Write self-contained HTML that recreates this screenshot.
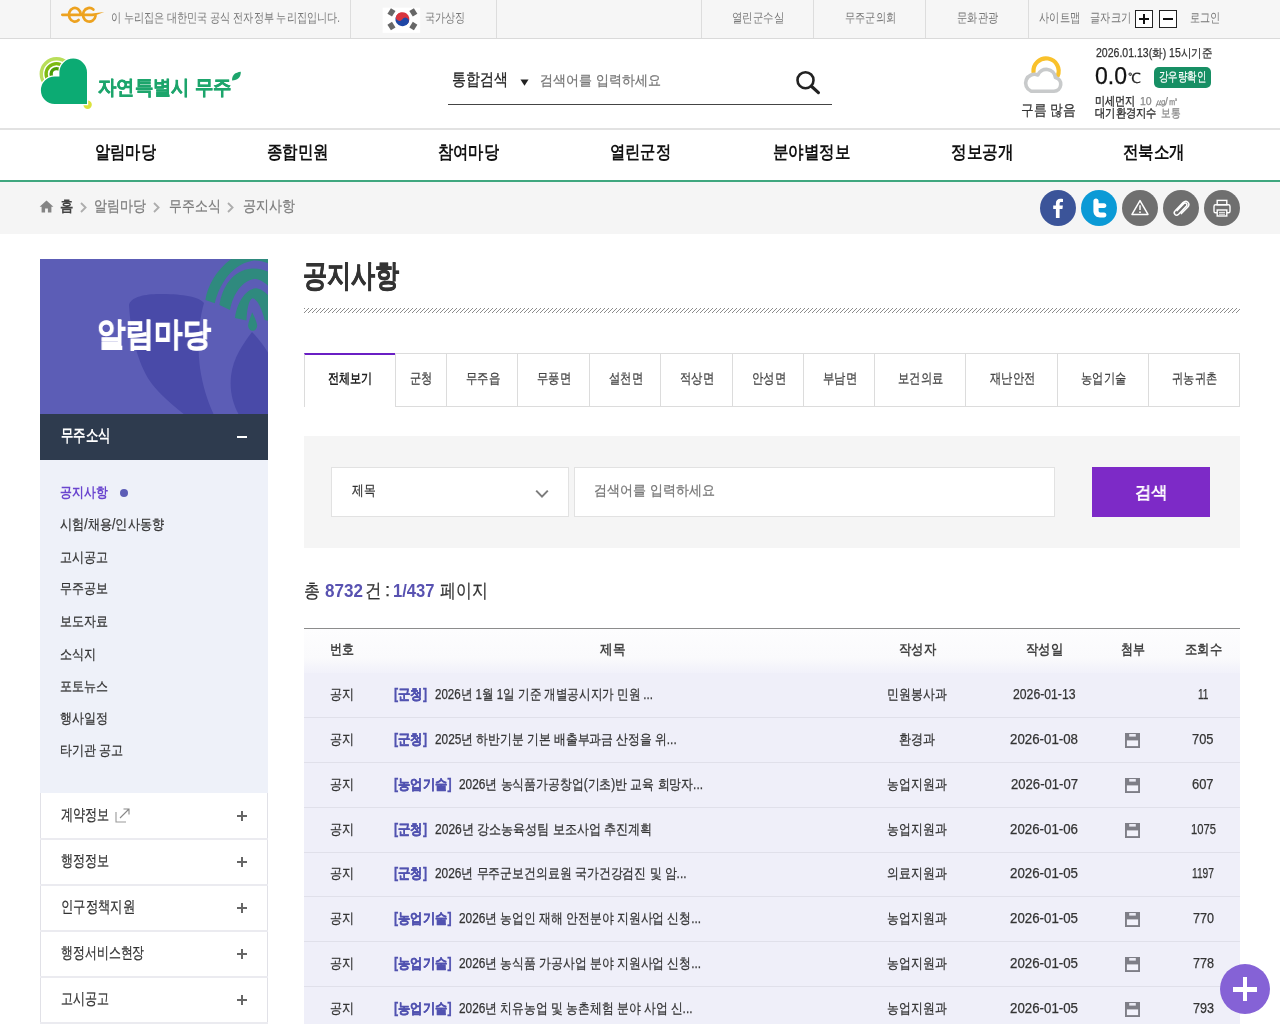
<!DOCTYPE html>
<html lang="ko">
<head>
<meta charset="utf-8">
<title>공지사항</title>
<style>
*{box-sizing:border-box;margin:0;padding:0}
html,body{width:1280px;height:1024px;overflow:hidden;background:#fff}
body{font-family:"Liberation Sans",sans-serif;color:#333;position:relative;font-size:14px}
.abs{position:absolute;white-space:pre;transform-origin:0 50%;-webkit-text-stroke-width:0.25px}
#top .abs{-webkit-text-stroke-width:0}
i{font-style:normal}
#wrap{position:absolute;left:0;top:0;width:1280px;height:1024px;overflow:hidden;will-change:transform}
.bx{position:absolute}
#top{position:absolute;left:0;top:0;width:1280px;height:39px;background:#f6f6f6;border-bottom:1px solid #dadada}
#top .vd{position:absolute;top:0;width:1px;height:38px;background:#dddddd}
.szb{position:absolute;top:10px;width:18px;height:18px;border:1px solid #222;background:#fff}
.szb i{position:absolute;background:#111}
#hdr{position:absolute;left:0;top:39px;width:1280px;height:90px;background:#fff}
#hdrb{position:absolute;left:0;top:128.4px;width:1280px;height:1.2px;background:#e2e2e2}
#gline{position:absolute;left:0;top:180px;width:1280px;height:2px;background:#40a77f}
#crumb{position:absolute;left:0;top:182px;width:1280px;height:52px;background:#f5f5f5}
.circ{position:absolute;top:190px;width:36px;height:36px;border-radius:50%}
#sidehead{position:absolute;left:40px;top:259px;width:228px;height:155px;background:#5c5db6;overflow:hidden}
#sidebar2{position:absolute;left:40px;top:414px;width:228px;height:46px;background:#2e3b4e}
#submenu{position:absolute;left:40px;top:460px;width:228px;height:333px;background:#eef1f9}
.sitem{position:absolute;left:40px;width:228px;height:45px;background:#fff;border:1px solid #e7e7ee}
.pl{position:absolute;width:10px;height:2px;background:#666}
.pl:after{content:"";position:absolute;left:4px;top:-4px;width:2px;height:10px;background:#666}
.tab{position:absolute;top:353px;height:54px;border:1px solid #dcdcdc;border-left:none;background:#fff}
.row{position:absolute;left:304px;width:936px;background:#efeff9;border-bottom:1px solid #e0e0ea}
</style>
</head>
<body>
<div id="wrap">
<div id="top">
<i class="vd" style="left:50px"></i><i class="vd" style="left:350px"></i><i class="vd" style="left:496px"></i><i class="vd" style="left:701px"></i><i class="vd" style="left:813px"></i><i class="vd" style="left:925px"></i><i class="vd" style="left:1028px"></i>
<svg class="abs" style="left:58px;top:4px" width="50" height="24" viewBox="58 4 50 24">
 <g fill="none" stroke="#eda21f" stroke-width="2.7" stroke-linecap="round">
  <path d="M80.68 14.20 A5.90 6.85 0 1 0 78.59 20.05"/>
  <path d="M93.35 9.55 A6.30 6.85 0 1 0 95.54 15.75"/>
 </g>
 <path d="M62.4 13.4 L92 13.6 L104.2 12.1 L93 16.3 L62.4 16.3 A1.45 1.45 0 0 1 62.4 13.4Z" fill="#eda21f"/>
</svg>
<svg class="abs" style="left:382px;top:7px" width="39" height="26" viewBox="382 7 39 26">
 <rect x="382.6" y="7.6" width="37.6" height="25.2" fill="#fff"/>
 <g transform="translate(402.4 19.2)">
  <g transform="rotate(33)">
  <path d="M-7 0 A7 7 0 0 1 7 0Z" fill="#d9353f"/>
  <path d="M-7 0 A7 7 0 0 0 7 0Z" fill="#1f47a6"/>
  <circle r="3.5" cx="-3.5" cy="0" fill="#d9353f"/>
  <circle r="3.5" cx="3.5" cy="0" fill="#1f47a6"/>
  </g>
  <g fill="#686868">
   <rect x="-15.6" y="-3.3" width="5.4" height="6.6" transform="rotate(32)"/>
   <rect x="10.2" y="-3.3" width="5.4" height="6.6" transform="rotate(32)"/>
   <rect x="-15.6" y="-3.3" width="5.4" height="6.6" transform="rotate(-32)"/>
   <rect x="10.2" y="-3.3" width="5.4" height="6.6" transform="rotate(-32)"/>
  </g>
 </g>
</svg>
<span class="abs" style="left:111.0px;top:10.0px;font-size:12.5px;line-height:16px;color:#777;transform:scaleX(0.7793);">이 누리집은 대한민국 공식 전자정부 누리집입니다.</span><span class="abs" style="left:425.0px;top:10.0px;font-size:12.5px;line-height:16px;color:#777;transform:scaleX(0.7692);">국가상징</span><span class="abs" style="left:732.0px;top:10.0px;font-size:12.5px;line-height:16px;color:#777;transform:scaleX(0.8000);">열린군수실</span><span class="abs" style="left:844.5px;top:10.0px;font-size:12.5px;line-height:16px;color:#777;transform:scaleX(0.7846);">무주군의회</span><span class="abs" style="left:957.0px;top:10.0px;font-size:12.5px;line-height:16px;color:#777;transform:scaleX(0.7885);">문화관광</span><span class="abs" style="left:1039.0px;top:10.0px;font-size:12.5px;line-height:16px;color:#777;transform:scaleX(0.7885);">사이트맵</span><span class="abs" style="left:1089.5px;top:10.0px;font-size:12.5px;line-height:16px;color:#777;transform:scaleX(0.7885);">글자크기</span><span class="abs" style="left:1189.5px;top:10.0px;font-size:12.5px;line-height:16px;color:#777;transform:scaleX(0.7821);">로그인</span>
<span class="szb" style="left:1135px"><i style="left:3px;top:7px;width:10px;height:2px"></i><i style="left:7px;top:3px;width:2px;height:10px"></i></span>
<span class="szb" style="left:1159px"><i style="left:3px;top:7px;width:10px;height:2px"></i></span>
</div>
<div id="hdr"></div><div id="hdrb"></div>
<svg class="abs" style="left:36px;top:52px" width="62" height="62" viewBox="36 52 62 62">
 <circle cx="87.6" cy="104.8" r="4.2" fill="#dbe23c"/>
 <g fill="none">
  <circle cx="56.5" cy="74" r="15.2" stroke="#b9de5a" stroke-width="3.4"/>
  <circle cx="56.5" cy="74" r="10.4" stroke="#7cba12" stroke-width="3.4"/>
  <circle cx="56.5" cy="74" r="5.4" stroke="#4b9d06" stroke-width="3.4"/>
 </g>
 <path d="M59.4 76.4 L59.4 72.4 A13.8 13.8 0 0 1 87 72.4 L87 104 L54.7 104 A13.8 13.8 0 0 1 54.7 76.4 Z" fill="#fff" stroke="#fff" stroke-width="2.4"/>
 <path d="M59.4 76.4 L59.4 72.4 A13.8 13.8 0 0 1 87 72.4 L87 104 L54.7 104 A13.8 13.8 0 0 1 54.7 76.4 Z" fill="#0cab73"/>
</svg>
<svg class="abs" style="left:231px;top:71px" width="11" height="11" viewBox="0 0 11 11"><path d="M1 9.5 C1 4 4 1.5 9.8 0.8 C10 6 7 9.5 1 9.5Z" fill="#1da56c"/></svg>
<span class="abs" style="left:98.0px;top:74.5px;font-size:19.5px;line-height:25px;color:#1da56c;transform:scaleX(0.9180);font-weight:bold;-webkit-text-stroke:0.5px #1da56c;">자연특별시 무주</span><div class="bx" style="left:448px;top:103.8px;width:384px;height:1.5px;background:#444"></div>
<span class="abs" style="left:452.0px;top:68.8px;font-size:16.5px;line-height:21px;color:#222;transform:scaleX(0.8235);">통합검색</span><svg class="abs" style="left:519.5px;top:78.6px" width="9" height="7.2" viewBox="0 0 10 8"><path d="M0.5 0.5 L9.5 0.5 L5 7.5Z" fill="#222"/></svg>
<span class="abs" style="left:540.3px;top:70.7px;font-size:14px;line-height:18px;color:#777;transform:scaleX(0.9277);">검색어를 입력하세요</span><svg class="abs" style="left:794px;top:69px" width="28" height="27" viewBox="0 0 28 27"><circle cx="11.5" cy="11.2" r="8" fill="none" stroke="#222" stroke-width="2.6"/><path d="M17.4 17.2 L24.4 23.6" stroke="#222" stroke-width="3.2" stroke-linecap="round"/></svg>
<svg class="abs" style="left:1019.3px;top:54px" width="48" height="42" viewBox="1020 54 48 42">
 <path d="M1034.5 72 A12.6 12.6 0 1 1 1058.6 76" fill="none" stroke="#f9c12b" stroke-width="4.2" stroke-linecap="round"/>
 <path d="M1032 91.2 L1055 91.2 A7 7 0 0 0 1056.4 77.4 A9.2 9.2 0 0 0 1038.8 75 A8.3 8.3 0 0 0 1032 91.2Z" fill="#fff" stroke="#c8cacb" stroke-width="3.6" stroke-linejoin="round"/>
</svg>
<span class="abs" style="left:1020.6px;top:100.4px;font-size:15px;line-height:20px;color:#333;transform:scaleX(0.8477);">구름 많음</span><span class="abs" style="left:1095.6px;top:44.5px;font-size:12px;line-height:16px;color:#333;transform:scaleX(0.8769);">2026.01.13(화) 15시기준</span><span class="abs" style="left:1095.2px;top:61.4px;font-size:23.5px;line-height:31px;color:#111;transform:scaleX(0.9794);">0.0</span><span class="abs" style="left:1128.0px;top:68.9px;font-size:14px;line-height:18px;color:#222;">℃</span><div class="bx" style="left:1153.5px;top:67px;width:57px;height:20.5px;background:#178f64;border-radius:5px"></div>
<span class="abs" style="left:1158.5px;top:68.7px;font-size:12.5px;line-height:16px;color:#fff;transform:scaleX(0.7231);">강우량확인</span><span class="abs" style="left:1095.2px;top:92.9px;font-size:12px;line-height:16px;color:#2a2a2a;transform:scaleX(0.8438);-webkit-text-stroke:0.35px #2a2a2a;">미세먼지</span><span class="abs" style="left:1140.0px;top:94.0px;font-size:11px;line-height:14px;color:#888;transform:scaleX(0.9539);">10 ㎍/㎥</span><span class="abs" style="left:1095.2px;top:105.1px;font-size:12px;line-height:16px;color:#2a2a2a;transform:scaleX(0.8542);-webkit-text-stroke:0.35px #2a2a2a;">대기환경지수</span><span class="abs" style="left:1161.3px;top:105.1px;font-size:12px;line-height:16px;color:#888;transform:scaleX(0.8125);">보통</span><span class="abs" style="left:95.0px;top:141.1px;font-size:17.5px;line-height:23px;color:#111;transform:scaleX(0.8472);font-weight:bold;-webkit-text-stroke-width:0;">알림마당</span><span class="abs" style="left:266.5px;top:141.1px;font-size:17.5px;line-height:23px;color:#111;transform:scaleX(0.8611);font-weight:bold;-webkit-text-stroke-width:0;">종합민원</span><span class="abs" style="left:438.0px;top:141.1px;font-size:17.5px;line-height:23px;color:#111;transform:scaleX(0.8472);font-weight:bold;-webkit-text-stroke-width:0;">참여마당</span><span class="abs" style="left:609.5px;top:141.1px;font-size:17.5px;line-height:23px;color:#111;transform:scaleX(0.8472);font-weight:bold;-webkit-text-stroke-width:0;">열린군정</span><span class="abs" style="left:772.5px;top:141.1px;font-size:17.5px;line-height:23px;color:#111;transform:scaleX(0.8611);font-weight:bold;-webkit-text-stroke-width:0;">분야별정보</span><span class="abs" style="left:951.2px;top:141.1px;font-size:17.5px;line-height:23px;color:#111;transform:scaleX(0.8681);font-weight:bold;-webkit-text-stroke-width:0;">정보공개</span><span class="abs" style="left:1123.0px;top:141.1px;font-size:17.5px;line-height:23px;color:#111;transform:scaleX(0.8611);font-weight:bold;-webkit-text-stroke-width:0;">전북소개</span>
<div id="gline"></div>
<div id="crumb"></div>
<svg class="abs" style="left:39px;top:200px" width="15" height="13" viewBox="0 0 15 13"><path d="M7.5 0.6 L14.4 6.8 L12.4 6.8 L12.4 12.4 L8.9 12.4 L8.9 8.4 L6.1 8.4 L6.1 12.4 L2.6 12.4 L2.6 6.8 L0.6 6.8Z" fill="#858585"/></svg>
<span class="abs" style="left:59.6px;top:196.4px;font-size:15px;line-height:20px;color:#444;transform:scaleX(0.8933);font-weight:bold;-webkit-text-stroke-width:0;">홈</span><svg class="abs" style="left:79.6px;top:202px" width="7" height="11" viewBox="0 0 7 11"><path d="M1 1 L5.6 5.5 L1 10" fill="none" stroke="#adadad" stroke-width="1.8"/></svg><svg class="abs" style="left:153.2px;top:202px" width="7" height="11" viewBox="0 0 7 11"><path d="M1 1 L5.6 5.5 L1 10" fill="none" stroke="#adadad" stroke-width="1.8"/></svg><svg class="abs" style="left:227.2px;top:202px" width="7" height="11" viewBox="0 0 7 11"><path d="M1 1 L5.6 5.5 L1 10" fill="none" stroke="#adadad" stroke-width="1.8"/></svg>
<span class="abs" style="left:94.0px;top:196.4px;font-size:15px;line-height:20px;color:#7c7c7c;transform:scaleX(0.8667);">알림마당</span><span class="abs" style="left:169.0px;top:196.4px;font-size:15px;line-height:20px;color:#7c7c7c;transform:scaleX(0.8583);">무주소식</span><span class="abs" style="left:243.0px;top:196.4px;font-size:15px;line-height:20px;color:#7c7c7c;transform:scaleX(0.8667);">공지사항</span>
<div class="circ" style="left:1040px;background:#3b5499"></div>
<div class="circ" style="left:1081px;background:#0b9ad6"></div>
<div class="circ" style="left:1122px;background:#6f6f6f"></div>
<div class="circ" style="left:1163px;background:#6f6f6f"></div>
<div class="circ" style="left:1204px;background:#6f6f6f"></div>
<svg class="abs" style="left:1040px;top:190px" width="36" height="36" viewBox="0 0 36 36"><path d="M19.6 28 L19.6 19 L22.4 19 L22.9 15.6 L19.6 15.6 L19.6 13.6 C19.6 12.5 20 12 21.3 12 L23 12 L23 8.9 C22.4 8.8 21.4 8.7 20.4 8.7 C17.7 8.7 15.9 10.3 15.9 13.2 L15.9 15.6 L13.2 15.6 L13.2 19 L15.9 19 L15.9 28Z" fill="#fff"/></svg>
<svg class="abs" style="left:1081px;top:190px" width="36" height="36" viewBox="0 0 36 36"><path d="M12.4 11 C12.4 9.4 13.6 8.4 15 8.4 C16.4 8.4 17.6 9.4 17.6 11 L17.6 13.2 L23 13.2 C24.4 13.2 25.4 14.2 25.4 15.6 C25.4 17 24.4 18 23 18 L17.6 18 L17.6 20.4 C17.6 21.8 18.4 22.6 19.8 22.6 L23 22.6 C24.4 22.6 25.4 23.6 25.4 25 C25.4 26.4 24.4 27.4 23 27.4 L19 27.4 C15 27.4 12.4 24.8 12.4 21Z" fill="#fff"/></svg>
<svg class="abs" style="left:1122px;top:190px" width="36" height="36" viewBox="0 0 36 36"><path d="M18 10.6 L26 24.4 L10 24.4Z" fill="none" stroke="#fff" stroke-width="1.5" stroke-linejoin="round"/><path d="M18 15.2 L18 20" stroke="#fff" stroke-width="1.5"/><circle cx="18" cy="22.2" r="0.9" fill="#fff"/></svg>
<svg class="abs" style="left:1163px;top:190px" width="36" height="36" viewBox="0 0 36 36"><path d="M14.2 20.6 L21 13.6 C22.6 12 25 14.2 23.4 16 L15.6 24.2 C13 26.8 9.6 23.4 12.2 20.8 L20 12.6 C23.4 9.2 28 13.6 24.6 17.2 L18.4 23.6" fill="none" stroke="#fff" stroke-width="1.5" stroke-linecap="round"/></svg>
<svg class="abs" style="left:1204px;top:190px" width="36" height="36" viewBox="0 0 36 36"><rect x="13.2" y="10.4" width="9.6" height="4.4" fill="none" stroke="#fff" stroke-width="1.4"/><rect x="10" y="14.8" width="16" height="8" rx="1.6" fill="none" stroke="#fff" stroke-width="1.4"/><rect x="13.2" y="20" width="9.6" height="6" fill="#6f6f6f" stroke="#fff" stroke-width="1.4"/><path d="M15 22.4 H21 M15 24.2 H21" stroke="#fff" stroke-width="0.9"/></svg>
<div id="sidehead">
<svg class="abs" style="left:0;top:0" width="228" height="155" viewBox="40 259 228 155">
 <path d="M129 305 C131 296 148 293.500 163 294 C182 294 200 297 204 303 C199 320 197 345 200 368 C203 388 208 402 214 415 L185 415 C172 405 160 394 152 384 C140 368 131 340 129 305Z" fill="#494aa8"/>
 <path d="M252 332 C243 344 233 358 231 376 C229.500 392 233 404 239 415 L269 415 L269 354 C264 346 258 338 252 332Z" fill="#494aa8"/>
 <g fill="#2f8a7e">
  <path d="M205.4 300 C207.5 286 216 270 232.500 258 L269 258 L269 263.500 C265 262 260 260.500 254 260.500 C234 263 220 282 214.800 303.200Z"/>
  <path d="M219.500 305 C222 288 232 270 252 268.500 C259 268.500 264 270 269 272 L269 287 C264 281 258 279 254 279 C242 281 233 294 230 310Z"/>
  <path d="M235 318 C236.500 304 245 289 256 288.200 C261 288.500 265 292 269 296 L269 321 L264.700 320 C262 309 257 298.500 252.500 298.200 C248.500 300 247 310 246.400 320.600Z"/>
  <path d="M252.200 312.300 C250.500 317 248.500 322 248.100 325.500 C248.500 329.500 251 330.800 252.500 330.800 C255 330.800 257 329 257.200 325.500 C256.500 321 254 316 252.200 312.300Z"/>
 </g>
</svg>
</div>
<div id="sidebar2"></div>
<div id="submenu"></div>
<span class="abs" style="left:97.4px;top:312.2px;font-size:33px;line-height:43px;color:#fff;transform:scaleX(0.8636);font-weight:bold;-webkit-text-stroke:0.9px #fff;">알림마당</span><span class="abs" style="left:61.0px;top:425.3px;font-size:17px;line-height:22px;color:#fff;transform:scaleX(0.7279);font-weight:bold;-webkit-text-stroke-width:0;">무주소식</span><div class="bx" style="left:237px;top:436px;width:10px;height:2px;background:#fff"></div>
<span class="abs" style="left:60.0px;top:483.0px;font-size:14px;line-height:18px;color:#6a45cf;transform:scaleX(0.8464);font-weight:bold;-webkit-text-stroke-width:0;">공지사항</span><div class="bx" style="left:120px;top:489px;width:8px;height:8px;border-radius:50%;background:#5c5db6"></div>
<span class="abs" style="left:60.0px;top:515.2px;font-size:14px;line-height:18px;color:#333;transform:scaleX(0.8682);">시험/채용/인사동향</span><span class="abs" style="left:60.0px;top:547.6px;font-size:14px;line-height:18px;color:#333;transform:scaleX(0.8571);">고시공고</span><span class="abs" style="left:60.0px;top:579.4px;font-size:14px;line-height:18px;color:#333;transform:scaleX(0.8571);">무주공보</span><span class="abs" style="left:60.0px;top:611.8px;font-size:14px;line-height:18px;color:#333;transform:scaleX(0.8571);">보도자료</span><span class="abs" style="left:60.0px;top:644.8px;font-size:14px;line-height:18px;color:#333;transform:scaleX(0.8571);">소식지</span><span class="abs" style="left:60.0px;top:676.7px;font-size:14px;line-height:18px;color:#333;transform:scaleX(0.8571);">포토뉴스</span><span class="abs" style="left:60.0px;top:709.2px;font-size:14px;line-height:18px;color:#333;transform:scaleX(0.8571);">행사일정</span><span class="abs" style="left:60.0px;top:741.4px;font-size:14px;line-height:18px;color:#333;transform:scaleX(0.8594);">타기관 공고</span>
<div class="bx" style="left:40px;top:793px;width:228px;height:231px;background:#fff;border-left:1px solid #e1e1e7;border-right:1px solid #e1e1e7"></div>
<div class="bx" style="left:40px;top:838px;width:228px;height:2px;background:#ebebf0"></div><div class="bx" style="left:40px;top:884px;width:228px;height:2px;background:#ebebf0"></div><div class="bx" style="left:40px;top:930px;width:228px;height:2px;background:#ebebf0"></div><div class="bx" style="left:40px;top:976px;width:228px;height:2px;background:#ebebf0"></div><div class="bx" style="left:40px;top:1021.5px;width:228px;height:2px;background:#ebebf0"></div>
<i class="pl" style="left:237px;top:815px"></i><span class="abs" style="left:61.0px;top:805.0px;font-size:15.5px;line-height:20px;color:#333;transform:scaleX(0.7562);">계약정보</span>
<i class="pl" style="left:237px;top:861px"></i><span class="abs" style="left:61.0px;top:851.0px;font-size:15.5px;line-height:20px;color:#333;transform:scaleX(0.7562);">행정정보</span>
<i class="pl" style="left:237px;top:907px"></i><span class="abs" style="left:61.0px;top:897.0px;font-size:15.5px;line-height:20px;color:#333;transform:scaleX(0.7729);">인구정책지원</span>
<i class="pl" style="left:237px;top:953px"></i><span class="abs" style="left:61.0px;top:943.0px;font-size:15.5px;line-height:20px;color:#333;transform:scaleX(0.7438);">행정서비스현장</span>
<i class="pl" style="left:237px;top:999px"></i><span class="abs" style="left:61.0px;top:989.0px;font-size:15.5px;line-height:20px;color:#333;transform:scaleX(0.7500);">고시공고</span>
<svg class="abs" style="left:115px;top:808px" width="16" height="15" viewBox="0 0 16 15"><path d="M1 4 L1 14 L11 14" fill="none" stroke="#999" stroke-width="1.1"/><path d="M5 10 L14 1 M8.500 1 L14 1 L14 6.500" fill="none" stroke="#888" stroke-width="1.1"/></svg>
<span class="abs" style="left:303.4px;top:255.3px;font-size:30.5px;line-height:40px;color:#333;transform:scaleX(0.7782);font-weight:bold;-webkit-text-stroke:0.6px #333;">공지사항</span><svg class="abs" style="left:304px;top:308px" width="936" height="5" shape-rendering="crispEdges"><defs><pattern id="hat" width="4" height="4" patternUnits="userSpaceOnUse"><rect x="0" y="0" width="1" height="1" fill="#8c8c8c"/><rect x="3" y="1" width="1" height="1" fill="#8c8c8c"/><rect x="2" y="2" width="1" height="1" fill="#8c8c8c"/><rect x="1" y="3" width="1" height="1" fill="#8c8c8c"/></pattern></defs><rect width="936" height="5" fill="url(#hat)"/></svg>
<div class="tab" style="left:304px;width:91px;border-left:1px solid #dcdcdc;border-top:2px solid #6a1fc4;border-bottom:none;border-right:none"></div><span class="abs" style="left:327.6px;top:369.2px;font-size:14px;line-height:18px;color:#222;transform:scaleX(0.7946);font-weight:bold;-webkit-text-stroke-width:0;">전체보기</span><div class="tab" style="left:395px;width:52px;border-left:1px solid #dcdcdc;"></div><span class="abs" style="left:409.8px;top:369.2px;font-size:14px;line-height:18px;color:#444;transform:scaleX(0.8036);">군청</span><div class="tab" style="left:447px;width:71px;"></div><span class="abs" style="left:465.5px;top:369.2px;font-size:14px;line-height:18px;color:#444;transform:scaleX(0.8095);">무주읍</span><div class="tab" style="left:518px;width:72px;"></div><span class="abs" style="left:537.0px;top:369.2px;font-size:14px;line-height:18px;color:#444;transform:scaleX(0.8095);">무풍면</span><div class="tab" style="left:590px;width:71px;"></div><span class="abs" style="left:608.5px;top:369.2px;font-size:14px;line-height:18px;color:#444;transform:scaleX(0.8095);">설천면</span><div class="tab" style="left:661px;width:72px;"></div><span class="abs" style="left:680.0px;top:369.2px;font-size:14px;line-height:18px;color:#444;transform:scaleX(0.8095);">적상면</span><div class="tab" style="left:733px;width:71px;"></div><span class="abs" style="left:751.5px;top:369.2px;font-size:14px;line-height:18px;color:#444;transform:scaleX(0.8095);">안성면</span><div class="tab" style="left:804px;width:71px;"></div><span class="abs" style="left:822.5px;top:369.2px;font-size:14px;line-height:18px;color:#444;transform:scaleX(0.8095);">부남면</span><div class="tab" style="left:875px;width:91px;"></div><span class="abs" style="left:898.0px;top:369.2px;font-size:14px;line-height:18px;color:#444;transform:scaleX(0.8036);">보건의료</span><div class="tab" style="left:966px;width:92px;"></div><span class="abs" style="left:989.5px;top:369.2px;font-size:14px;line-height:18px;color:#444;transform:scaleX(0.8036);">재난안전</span><div class="tab" style="left:1058px;width:91px;"></div><span class="abs" style="left:1081.0px;top:369.2px;font-size:14px;line-height:18px;color:#444;transform:scaleX(0.8036);">농업기술</span><div class="tab" style="left:1149px;width:91px;"></div><span class="abs" style="left:1172.0px;top:369.2px;font-size:14px;line-height:18px;color:#444;transform:scaleX(0.8036);">귀농귀촌</span>
<div class="bx" style="left:304px;top:436px;width:936px;height:112px;background:#f5f5f5"></div>
<div class="bx" style="left:331px;top:467px;width:238px;height:50px;background:#fff;border:1px solid #e2e2e2"></div>
<div class="bx" style="left:574px;top:467px;width:481px;height:50px;background:#fff;border:1px solid #e2e2e2"></div>
<div class="bx" style="left:1092px;top:467px;width:118px;height:50px;background:#7d2ac7"></div>
<span class="abs" style="left:352.0px;top:482.1px;font-size:13.5px;line-height:18px;color:#333;transform:scaleX(0.8393);">제목</span><svg class="abs" style="left:535px;top:488.6px" width="14" height="10" viewBox="0 0 14 10"><path d="M1.2 1.6 L7 7.6 L12.800 1.600" fill="none" stroke="#7c7c7c" stroke-width="2"/></svg>
<span class="abs" style="left:594.3px;top:481.4px;font-size:14px;line-height:18px;color:#777;transform:scaleX(0.9277);">검색어를 입력하세요</span><span class="abs" style="left:1135.0px;top:482.1px;font-size:17px;line-height:22px;color:#fff;transform:scaleX(0.9559);font-weight:bold;-webkit-text-stroke-width:0;">검색</span><span class="abs" style="left:304.2px;top:578.8px;font-size:18.5px;line-height:24px;color:#333;transform:scaleX(0.8421);">총</span><span class="abs" style="left:325.0px;top:578.8px;font-size:18.5px;line-height:24px;color:#5852b1;transform:scaleX(0.9233);font-weight:bold;-webkit-text-stroke-width:0;">8732</span><span class="abs" style="left:364.9px;top:578.8px;font-size:18.5px;line-height:24px;color:#333;transform:scaleX(0.8684);">건</span><span class="abs" style="left:385.0px;top:578.3px;font-size:18.5px;line-height:24px;color:#333;">:</span><span class="abs" style="left:393.0px;top:578.8px;font-size:18.5px;line-height:24px;color:#5852b1;transform:scaleX(0.8964);font-weight:bold;-webkit-text-stroke-width:0;">1/437</span><span class="abs" style="left:439.5px;top:578.8px;font-size:18.5px;line-height:24px;color:#333;transform:scaleX(0.8333);">페이지</span>
<div class="bx" style="left:304px;top:628px;width:936px;height:1px;background:#8c8c8c"></div>
<div class="bx" style="left:304px;top:629px;width:936px;height:44px;background:linear-gradient(#fdfdfe 0,#fafafc 65%,#f1f1fa 100%)"></div>
<span class="abs" style="left:329.6px;top:639.9px;font-size:14px;line-height:18px;color:#444;transform:scaleX(0.8571);font-weight:bold;-webkit-text-stroke-width:0;">번호</span><span class="abs" style="left:600.0px;top:639.9px;font-size:14px;line-height:18px;color:#444;transform:scaleX(0.8929);font-weight:bold;-webkit-text-stroke-width:0;">제목</span><span class="abs" style="left:898.5px;top:639.9px;font-size:14px;line-height:18px;color:#444;transform:scaleX(0.8810);font-weight:bold;-webkit-text-stroke-width:0;">작성자</span><span class="abs" style="left:1025.5px;top:639.9px;font-size:14px;line-height:18px;color:#444;transform:scaleX(0.8810);font-weight:bold;-webkit-text-stroke-width:0;">작성일</span><span class="abs" style="left:1120.5px;top:639.9px;font-size:14px;line-height:18px;color:#444;transform:scaleX(0.8571);font-weight:bold;-webkit-text-stroke-width:0;">첨부</span><span class="abs" style="left:1184.5px;top:639.9px;font-size:14px;line-height:18px;color:#444;transform:scaleX(0.8810);font-weight:bold;-webkit-text-stroke-width:0;">조회수</span>
<div class="row" style="top:673px;height:45px"></div><span class="abs" style="left:329.6px;top:684.6px;font-size:14px;line-height:18px;color:#333;transform:scaleX(0.8571);">공지</span><span class="abs" style="left:394.3px;top:684.6px;font-size:14px;line-height:18px;color:#5152b0;transform:scaleX(0.8841);font-weight:bold;-webkit-text-stroke-width:0.3px;">[군청]</span><span class="abs" style="left:435.0px;top:684.6px;font-size:14px;line-height:18px;color:#333;transform:scaleX(0.8266);">2026년 1월 1일 기준 개별공시지가 민원 ...</span><span class="abs" style="left:887.3px;top:684.6px;font-size:14px;line-height:18px;color:#333;transform:scaleX(0.8486);">민원봉사과</span><span class="abs" style="left:1012.8px;top:684.6px;font-size:14px;line-height:18px;color:#333;transform:scaleX(0.8726);">2026-01-13</span><span class="abs" style="left:1197.8px;top:684.6px;font-size:14px;line-height:18px;color:#333;transform:scaleX(0.7218);">11</span>
<div class="row" style="top:718px;height:45px"></div><span class="abs" style="left:329.6px;top:729.6px;font-size:14px;line-height:18px;color:#333;transform:scaleX(0.8571);">공지</span><span class="abs" style="left:394.3px;top:729.6px;font-size:14px;line-height:18px;color:#5152b0;transform:scaleX(0.8841);font-weight:bold;-webkit-text-stroke-width:0.3px;">[군청]</span><span class="abs" style="left:435.0px;top:729.6px;font-size:14px;line-height:18px;color:#333;transform:scaleX(0.8443);">2025년 하반기분 기본 배출부과금 산정을 위...</span><span class="abs" style="left:899.0px;top:729.6px;font-size:14px;line-height:18px;color:#333;transform:scaleX(0.8571);">환경과</span><span class="abs" style="left:1010.0px;top:729.6px;font-size:14px;line-height:18px;color:#333;transform:scaleX(0.9494);">2026-01-08</span><svg class="abs" style="left:1125px;top:732.7px" width="15" height="15" viewBox="0 0 15 15"><rect x="0" y="0" width="15" height="15" fill="#7e7e87"/><rect x="4.200" y="1" width="6.600" height="2.600" fill="#ececf6"/><rect x="1.900" y="7.400" width="11.200" height="5.700" fill="#f2f2fb"/></svg><span class="abs" style="left:1192.2px;top:729.6px;font-size:14px;line-height:18px;color:#333;transform:scaleX(0.9204);">705</span>
<div class="row" style="top:763px;height:45px"></div><span class="abs" style="left:329.6px;top:774.6px;font-size:14px;line-height:18px;color:#333;transform:scaleX(0.8571);">공지</span><span class="abs" style="left:394.3px;top:774.6px;font-size:14px;line-height:18px;color:#5152b0;transform:scaleX(0.8802);font-weight:bold;-webkit-text-stroke-width:0.3px;">[농업기술]</span><span class="abs" style="left:458.8px;top:774.6px;font-size:14px;line-height:18px;color:#333;transform:scaleX(0.8478);">2026년 농식품가공창업(기초)반 교육 희망자...</span><span class="abs" style="left:887.3px;top:774.6px;font-size:14px;line-height:18px;color:#333;transform:scaleX(0.8486);">농업지원과</span><span class="abs" style="left:1010.5px;top:774.6px;font-size:14px;line-height:18px;color:#333;transform:scaleX(0.9354);">2026-01-07</span><svg class="abs" style="left:1125px;top:777.7px" width="15" height="15" viewBox="0 0 15 15"><rect x="0" y="0" width="15" height="15" fill="#7e7e87"/><rect x="4.200" y="1" width="6.600" height="2.600" fill="#ececf6"/><rect x="1.900" y="7.400" width="11.200" height="5.700" fill="#f2f2fb"/></svg><span class="abs" style="left:1192.2px;top:774.6px;font-size:14px;line-height:18px;color:#333;transform:scaleX(0.9204);">607</span>
<div class="row" style="top:808px;height:45px"></div><span class="abs" style="left:329.6px;top:819.6px;font-size:14px;line-height:18px;color:#333;transform:scaleX(0.8571);">공지</span><span class="abs" style="left:394.3px;top:819.6px;font-size:14px;line-height:18px;color:#5152b0;transform:scaleX(0.8841);font-weight:bold;-webkit-text-stroke-width:0.3px;">[군청]</span><span class="abs" style="left:435.0px;top:819.6px;font-size:14px;line-height:18px;color:#333;transform:scaleX(0.8603);">2026년 강소농육성팀 보조사업 추진계획</span><span class="abs" style="left:887.3px;top:819.6px;font-size:14px;line-height:18px;color:#333;transform:scaleX(0.8486);">농업지원과</span><span class="abs" style="left:1010.0px;top:819.6px;font-size:14px;line-height:18px;color:#333;transform:scaleX(0.9494);">2026-01-06</span><svg class="abs" style="left:1125px;top:822.7px" width="15" height="15" viewBox="0 0 15 15"><rect x="0" y="0" width="15" height="15" fill="#7e7e87"/><rect x="4.200" y="1" width="6.600" height="2.600" fill="#ececf6"/><rect x="1.900" y="7.400" width="11.200" height="5.700" fill="#f2f2fb"/></svg><span class="abs" style="left:1190.5px;top:819.6px;font-size:14px;line-height:18px;color:#333;transform:scaleX(0.8024);">1075</span>
<div class="row" style="top:853px;height:44px"></div><span class="abs" style="left:329.6px;top:864.1px;font-size:14px;line-height:18px;color:#333;transform:scaleX(0.8571);">공지</span><span class="abs" style="left:394.3px;top:864.1px;font-size:14px;line-height:18px;color:#5152b0;transform:scaleX(0.8841);font-weight:bold;-webkit-text-stroke-width:0.3px;">[군청]</span><span class="abs" style="left:435.0px;top:864.1px;font-size:14px;line-height:18px;color:#333;transform:scaleX(0.8486);">2026년 무주군보건의료원 국가건강검진 및 암...</span><span class="abs" style="left:887.3px;top:864.1px;font-size:14px;line-height:18px;color:#333;transform:scaleX(0.8486);">의료지원과</span><span class="abs" style="left:1010.0px;top:864.1px;font-size:14px;line-height:18px;color:#333;transform:scaleX(0.9494);">2026-01-05</span><span class="abs" style="left:1192.0px;top:864.1px;font-size:14px;line-height:18px;color:#333;transform:scaleX(0.7307);">1197</span>
<div class="row" style="top:897px;height:45px"></div><span class="abs" style="left:329.6px;top:908.6px;font-size:14px;line-height:18px;color:#333;transform:scaleX(0.8571);">공지</span><span class="abs" style="left:394.3px;top:908.6px;font-size:14px;line-height:18px;color:#5152b0;transform:scaleX(0.8802);font-weight:bold;-webkit-text-stroke-width:0.3px;">[농업기술]</span><span class="abs" style="left:458.8px;top:908.6px;font-size:14px;line-height:18px;color:#333;transform:scaleX(0.8454);">2026년 농업인 재해 안전분야 지원사업 신청...</span><span class="abs" style="left:887.3px;top:908.6px;font-size:14px;line-height:18px;color:#333;transform:scaleX(0.8486);">농업지원과</span><span class="abs" style="left:1010.0px;top:908.6px;font-size:14px;line-height:18px;color:#333;transform:scaleX(0.9494);">2026-01-05</span><svg class="abs" style="left:1125px;top:911.7px" width="15" height="15" viewBox="0 0 15 15"><rect x="0" y="0" width="15" height="15" fill="#7e7e87"/><rect x="4.200" y="1" width="6.600" height="2.600" fill="#ececf6"/><rect x="1.900" y="7.400" width="11.200" height="5.700" fill="#f2f2fb"/></svg><span class="abs" style="left:1192.5px;top:908.6px;font-size:14px;line-height:18px;color:#333;transform:scaleX(0.8990);">770</span>
<div class="row" style="top:942px;height:45px"></div><span class="abs" style="left:329.6px;top:953.6px;font-size:14px;line-height:18px;color:#333;transform:scaleX(0.8571);">공지</span><span class="abs" style="left:394.3px;top:953.6px;font-size:14px;line-height:18px;color:#5152b0;transform:scaleX(0.8802);font-weight:bold;-webkit-text-stroke-width:0.3px;">[농업기술]</span><span class="abs" style="left:458.8px;top:953.6px;font-size:14px;line-height:18px;color:#333;transform:scaleX(0.8454);">2026년 농식품 가공사업 분야 지원사업 신청...</span><span class="abs" style="left:887.3px;top:953.6px;font-size:14px;line-height:18px;color:#333;transform:scaleX(0.8486);">농업지원과</span><span class="abs" style="left:1010.0px;top:953.6px;font-size:14px;line-height:18px;color:#333;transform:scaleX(0.9494);">2026-01-05</span><svg class="abs" style="left:1125px;top:956.7px" width="15" height="15" viewBox="0 0 15 15"><rect x="0" y="0" width="15" height="15" fill="#7e7e87"/><rect x="4.200" y="1" width="6.600" height="2.600" fill="#ececf6"/><rect x="1.900" y="7.400" width="11.200" height="5.700" fill="#f2f2fb"/></svg><span class="abs" style="left:1192.5px;top:953.6px;font-size:14px;line-height:18px;color:#333;transform:scaleX(0.8990);">778</span>
<div class="row" style="top:987px;height:45px"></div><span class="abs" style="left:329.6px;top:998.6px;font-size:14px;line-height:18px;color:#333;transform:scaleX(0.8571);">공지</span><span class="abs" style="left:394.3px;top:998.6px;font-size:14px;line-height:18px;color:#5152b0;transform:scaleX(0.8802);font-weight:bold;-webkit-text-stroke-width:0.3px;">[농업기술]</span><span class="abs" style="left:458.8px;top:998.6px;font-size:14px;line-height:18px;color:#333;transform:scaleX(0.8455);">2026년 치유농업 및 농촌체험 분야 사업 신...</span><span class="abs" style="left:887.3px;top:998.6px;font-size:14px;line-height:18px;color:#333;transform:scaleX(0.8486);">농업지원과</span><span class="abs" style="left:1010.0px;top:998.6px;font-size:14px;line-height:18px;color:#333;transform:scaleX(0.9494);">2026-01-05</span><svg class="abs" style="left:1125px;top:1001.7px" width="15" height="15" viewBox="0 0 15 15"><rect x="0" y="0" width="15" height="15" fill="#7e7e87"/><rect x="4.200" y="1" width="6.600" height="2.600" fill="#ececf6"/><rect x="1.900" y="7.400" width="11.200" height="5.700" fill="#f2f2fb"/></svg><span class="abs" style="left:1192.5px;top:998.6px;font-size:14px;line-height:18px;color:#333;transform:scaleX(0.8990);">793</span>
<div class="bx" style="left:1220px;top:964px;width:50px;height:50px;border-radius:50%;background:#8562d6"></div>
<div class="bx" style="left:1233px;top:987px;width:24px;height:4.5px;background:#fff"></div><div class="bx" style="left:1242.8px;top:977px;width:4.5px;height:24px;background:#fff"></div>
</div>
</body>
</html>
